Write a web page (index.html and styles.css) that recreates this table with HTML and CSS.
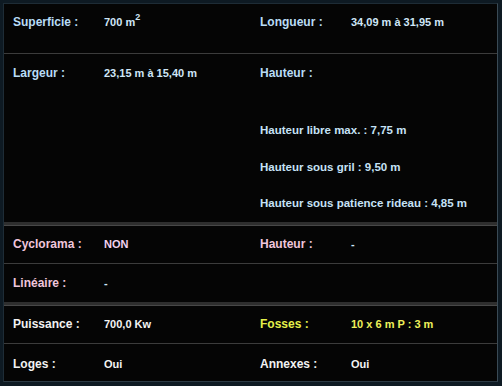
FILE: index.html
```html
<!DOCTYPE html>
<html lang="fr">
<head>
<meta charset="utf-8">
<title>Fiche technique</title>
<link rel="stylesheet" href="styles.css">
</head>
<body>
<div class="frame">
  <div class="sheet">
    <div class="row row-first">
      <div class="cell"><span class="label blue">Superficie :</span><span class="value">700 m<sup>2</sup></span></div>
      <div class="cell"><span class="label blue">Longueur :</span><span class="value">34,09 m à 31,95 m</span></div>
    </div>
    <div class="row sep">
      <div class="cell"><span class="label blue">Largeur :</span><span class="value">23,15 m à 15,40 m</span></div>
      <div class="cell stack">
        <span class="label blue">Hauteur :</span>
        <ul class="heights">
          <li>Hauteur libre max. : 7,75 m</li>
          <li>Hauteur sous gril : 9,50 m</li>
          <li>Hauteur sous patience rideau : 4,85 m</li>
        </ul>
      </div>
    </div>
    <div class="row sep-thick">
      <div class="cell"><span class="label pink">Cyclorama :</span><span class="value pinkv">NON</span></div>
      <div class="cell"><span class="label pink">Hauteur :</span><span class="value">-</span></div>
    </div>
    <div class="row sep">
      <div class="cell"><span class="label pink">Linéaire :</span><span class="value">-</span></div>
      <div class="cell"></div>
    </div>
    <div class="row sep-thick">
      <div class="cell"><span class="label white">Puissance :</span><span class="value whitev">700,0 Kw</span></div>
      <div class="cell"><span class="label yellow">Fosses :</span><span class="value yellowv">10 x 6 m P : 3 m</span></div>
    </div>
    <div class="row sep row-last">
      <div class="cell"><span class="label white">Loges :</span><span class="value whitev">Oui</span></div>
      <div class="cell"><span class="label white">Annexes :</span><span class="value whitev">Oui</span></div>
    </div>
  </div>
</div>
</body>
</html>
```
FILE: styles.css
```css
html, body {
  margin: 0;
  padding: 0;
  background: #0e1a23;
}
body {
  width: 502px;
  height: 386px;
  overflow: hidden;
  font-family: "Liberation Sans", Arial, sans-serif;
  font-weight: bold;
}
.frame {
  padding: 3px 4px 2px 3px;
}
.sheet {
  background: #050505;
  border: 1px solid #1e2c36;
  border-right-color: #3a4a55;
  border-bottom-color: #2c3a44;
  height: 379px;
  box-sizing: border-box;
  display: flex;
  flex-direction: column;
}
.row {
  display: grid;
  grid-template-columns: 247px 1fr;
  padding: 12px 0 12px;
}
.row-first {
  padding: 11px 0 24px;
}
.row-last {
  flex: 1;
  padding-top: 13px;
}
.sep {
  border-top: 1px solid #3c3c3c;
}
.sep-thick {
  border-top: 3px solid #2e2e2e;
  box-shadow: inset 0 1px 0 #484848;
}
.cell {
  display: flex;
  align-items: flex-start;
  line-height: 14px;
}
.cell:first-child {
  padding-left: 9px;
}
.cell:last-child {
  padding-left: 9px;
}
.label {
  width: 91px;
  flex: none;
  font-size: 12px;
}
.value {
  font-size: 11px;
  color: #cfe6f7;
}
.value sup {
  font-size: 9px;
  line-height: 0;
  vertical-align: 6px;
}
.stack {
  flex-direction: column;
}
.heights {
  list-style: none;
  margin: 43px 0 0;
  padding: 0;
  font-size: 11.5px;
  color: #c6e2f6;
}
.heights li {
  line-height: 14px;
  margin-bottom: 22.5px;
}
.heights li:last-child {
  margin-bottom: 0;
}
.blue { color: #b9dcf6; }
.pink { color: #f0c6dc; }
.pinkv { color: #f3d2ef; }
.white { color: #f2f2f2; }
.whitev { color: #f4f4f4; }
.yellow { color: #e4f04a; }
.yellowv { color: #eef05a; }
```
